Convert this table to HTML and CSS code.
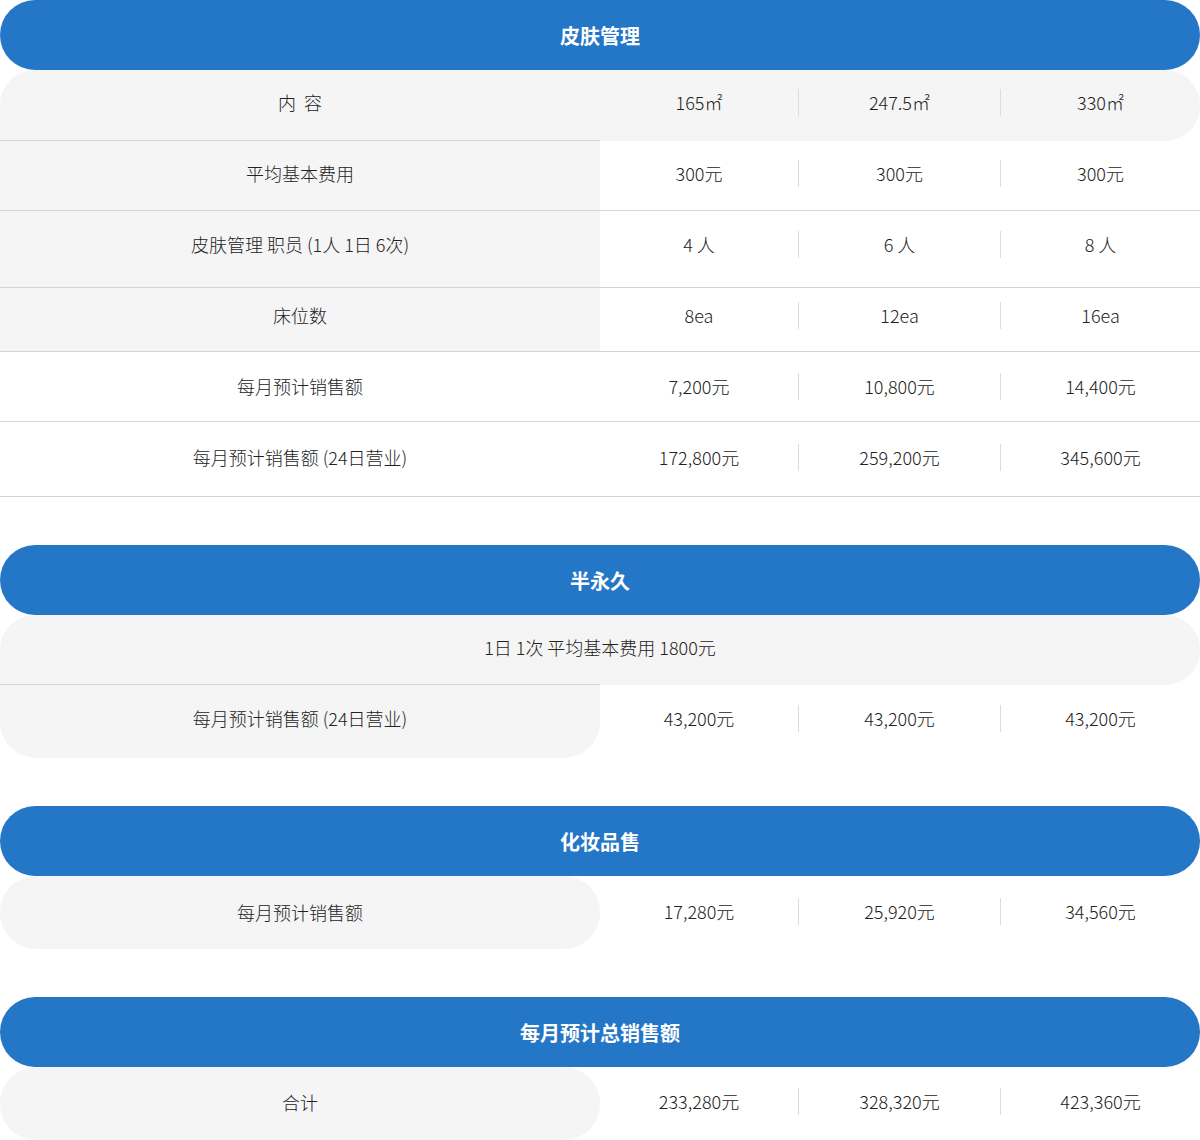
FILE: index.html
```html
<!DOCTYPE html>
<html lang="zh-CN">
<head>
<meta charset="utf-8">
<title>收益表</title>
<link rel="stylesheet" href="styles.css">
</head>
<body>
<div class="plan">
  <section class="block">
    <h2 class="block-title">皮肤管理</h2>
    <div class="row row-top h71 s6">
      <div class="label label-line">内&nbsp;&nbsp;容</div>
      <div class="val">165㎡</div><div class="val sep">247.5㎡</div><div class="val sep">330㎡</div>
    </div>
    <div class="row row-line h70 s5">
      <div class="label grey">平均基本费用</div>
      <div class="val">300元</div><div class="val sep">300元</div><div class="val sep">300元</div>
    </div>
    <div class="row row-line h77 s10">
      <div class="label grey">皮肤管理 职员 (1人 1日 6次)</div>
      <div class="val">4 人</div><div class="val sep">6 人</div><div class="val sep">8 人</div>
    </div>
    <div class="row row-line h64 s9">
      <div class="label grey">床位数</div>
      <div class="val">8ea</div><div class="val sep">12ea</div><div class="val sep">16ea</div>
    </div>
    <div class="row row-line h70 s1">
      <div class="label">每月预计销售额</div>
      <div class="val">7,200元</div><div class="val sep">10,800元</div><div class="val sep">14,400元</div>
    </div>
    <div class="row row-line h75 s4">
      <div class="label">每月预计销售额 (24日营业)</div>
      <div class="val">172,800元</div><div class="val sep">259,200元</div><div class="val sep">345,600元</div>
    </div>
  </section>

  <section class="block">
    <h2 class="block-title">半永久</h2>
    <div class="row-note">1日 1次 平均基本费用 1800元</div>
    <div class="row h73 s7">
      <div class="label grey round-bottom">每月预计销售额 (24日营业)</div>
      <div class="val">43,200元</div><div class="val sep">43,200元</div><div class="val sep">43,200元</div>
    </div>
  </section>

  <section class="block">
    <h2 class="block-title">化妆品售</h2>
    <div class="row h73 s2">
      <div class="label grey pill">每月预计销售额</div>
      <div class="val">17,280元</div><div class="val sep">25,920元</div><div class="val sep">34,560元</div>
    </div>
  </section>

  <section class="block">
    <h2 class="block-title">每月预计总销售额</h2>
    <div class="row h73 s4">
      <div class="label grey pill">合计</div>
      <div class="val">233,280元</div><div class="val sep">328,320元</div><div class="val sep">423,360元</div>
    </div>
  </section>
</div>
</body>
</html>
```

FILE: styles.css
```css
* { box-sizing: border-box; }

html, body {
  margin: 0;
  padding: 0;
  background: #fff;
}

body {
  font-family: "Noto Sans CJK SC", "Noto Sans", sans-serif;
  font-weight: 300;
  color: #222;
  font-size: 18px;
}

.plan {
  width: 1200px;
  display: flex;
  flex-direction: column;
  gap: 48px;
}

.block {
  display: flex;
  flex-direction: column;
}

.block-title {
  margin: 0;
  height: 70px;
  line-height: 70px;
  padding-top: 1px;
  border-radius: 35px;
  background: #2476c7;
  color: #fff;
  font-size: 20px;
  font-weight: 700;
  text-align: center;
}

.row {
  --s: 2px;
  display: grid;
  grid-template-columns: 600px 198px 202px 200px;
  grid-template-rows: 100%;
  align-items: center;
}

.row-top {
  background: #f5f5f5;
  border-radius: 35px 35px 35px 0;
}

.row-line {
  border-bottom: 1px solid #d4d4d4;
}

.h64 { height: 64px; }
.h70 { height: 70px; }
.h71 { height: 71px; }
.h73 { height: 73px; }
.h75 { height: 75px; }
.h77 { height: 77px; }

.s1 { --s: 1px; }
.s2 { --s: 2px; }
.s4 { --s: 4px; }
.s5 { --s: 5px; }
.s6 { --s: 6px; }
.s7 { --s: 7px; }
.s9 { --s: 9px; }
.s10 { --s: 10px; }

.label {
  align-self: stretch;
  display: flex;
  align-items: center;
  justify-content: center;
  padding-bottom: var(--s);
}

.label-line {
  border-bottom: 1px solid #d4d4d4;
}

.grey {
  background: #f5f5f5;
}

.round-bottom {
  border-radius: 0 0 36px 36px;
}

.pill {
  border-radius: 36px;
}

.val {
  height: 27px;
  line-height: 27px;
  text-align: center;
  white-space: nowrap;
  margin-top: calc(-1 * var(--s));
}

.sep {
  border-left: 1px solid #dcdcdc;
}

.row-note {
  height: 70px;
  display: flex;
  align-items: center;
  justify-content: center;
  padding-bottom: 7px;
  border-radius: 35px 35px 35px 0;
  background:
    linear-gradient(#d4d4d4, #d4d4d4) left bottom / 600px 1px no-repeat,
    #f5f5f5;
}
```
